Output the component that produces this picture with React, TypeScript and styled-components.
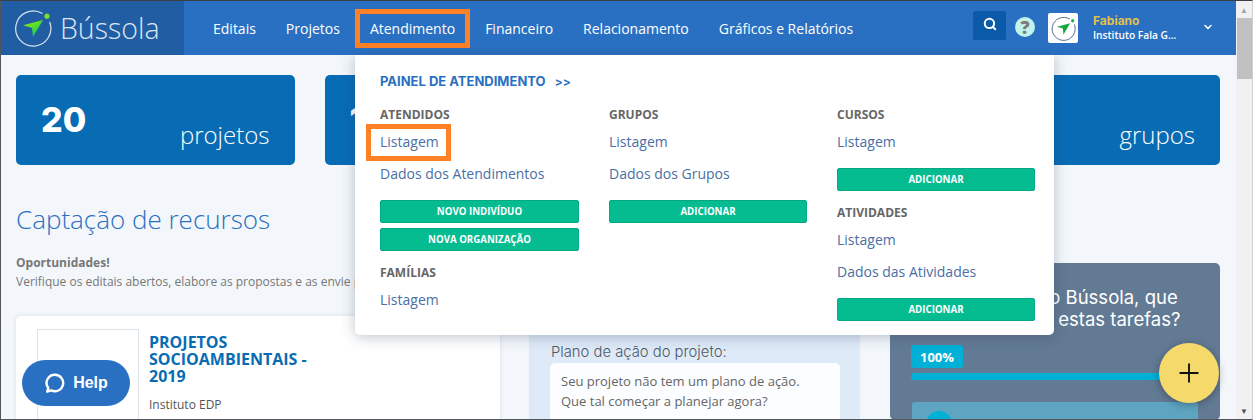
import React from 'react';
import styled, { createGlobalStyle } from 'styled-components';
import { Search, ChevronDown, Plus } from 'lucide-react';

const GlobalStyle = createGlobalStyle`
    html, body {
        margin: 0;
        padding: 0;
        overflow: hidden;
    }
    body {
        font-family: 'Open Sans', 'Liberation Sans', sans-serif;
    }
    * {
        box-sizing: border-box;
    }
`;

const NAV_ITEMS = ['Editais', 'Projetos', 'Atendimento', 'Financeiro', 'Relacionamento', 'Gráficos e Relatórios'];

const STATS = [
    { value: '20', label: 'projetos' },
    { value: '17', label: 'atendidos' },
    { value: '48', label: 'cursos' },
    { value: '12', label: 'grupos' },
];

const LogoMark: React.FC<{ id: string; size: number; ring: string; dot: string; tip: string; tail: string }> = ({
    id,
    size,
    ring,
    dot,
    tip,
    tail,
}) => (
    <svg width={size} height={size} viewBox="0 0 40 40" fill="none">
        <defs>
            <linearGradient id={id} x1="0" y1="0" x2="0.6" y2="1">
                <stop offset="0" stopColor={tip} />
                <stop offset="1" stopColor={tail} />
            </linearGradient>
        </defs>
        <path d="M29.5 4.5A18.5 18.5 0 1 0 37.6 14" stroke={ring} strokeWidth="1.3" strokeLinecap="round" />
        <circle cx="34.7" cy="7.5" r="2.7" fill={dot} />
        <path d="M9.5 17 L30.5 11.5 L20 29.5 L19 20 Z" fill={`url(#${id})`} />
    </svg>
);

const App: React.FC = () => {
    return (
        <>
            <GlobalStyle />
            <Window>
                <Page>
                    <Header>
                        <LogoArea>
                            <LogoMark id="logo-main" size={38} ring="#d4e2f0" dot="#7be02c" tip="#9ef000" tail="#12c85a" />
                            <LogoText>Bússola</LogoText>
                        </LogoArea>
                        <Nav>
                            {NAV_ITEMS.map((item) => (
                                <NavItem key={item} $highlight={item === 'Atendimento'}>
                                    {item}
                                </NavItem>
                            ))}
                        </Nav>
                        <HeaderRight>
                            <SearchButton>
                                <Search size={14} color="#fff" strokeWidth={3.4} />
                            </SearchButton>
                            <HelpCircle>?</HelpCircle>
                            <Avatar>
                                <LogoMark id="logo-small" size={25} ring="#35507a" dot="#1db54a" tip="#1db54a" tail="#0f9c3a" />
                            </Avatar>
                            <UserInfo>
                                <UserName>Fabiano</UserName>
                                <UserOrg>Instituto Fala G...</UserOrg>
                            </UserInfo>
                            <ChevronWrap>
                                <ChevronDown size={12} color="#fff" strokeWidth={3} />
                            </ChevronWrap>
                        </HeaderRight>
                    </Header>

                    <Content>
                        <StatRow>
                            {STATS.map((stat) => (
                                <StatCard key={stat.label}>
                                    <StatValue>{stat.value}</StatValue>
                                    <StatLabel>{stat.label}</StatLabel>
                                </StatCard>
                            ))}
                        </StatRow>

                        <Columns>
                            <LeftColumn>
                                <SectionTitle>Captação de recursos</SectionTitle>
                                <IntroBold>Oportunidades!</IntroBold>
                                <IntroText>Verifique os editais abertos, elabore as propostas e as envie para análise.</IntroText>
                                <EditalCard>
                                    <EditalImage />
                                    <EditalBody>
                                        <EditalTitle>PROJETOS SOCIOAMBIENTAIS - 2019</EditalTitle>
                                        <EditalOrg>Instituto EDP</EditalOrg>
                                    </EditalBody>
                                </EditalCard>
                            </LeftColumn>
                            <PlanCard>
                                <PlanLabel>Plano de ação do projeto:</PlanLabel>
                                <PlanBox>
                                    Seu projeto não tem um plano de ação.
                                    <br />
                                    Que tal começar a planejar agora?
                                </PlanBox>
                            </PlanCard>
                            <TaskPanel>
                                <TaskTitle>
                                    Já conheceu o Bússola, que
                                    <br />
                                    tal fazer todas estas tarefas?
                                </TaskTitle>
                                <ProgressChip>100%</ProgressChip>
                                <ProgressBar />
                                <TaskBox>
                                    <TaskDot />
                                </TaskBox>
                            </TaskPanel>
                        </Columns>
                    </Content>

                    <Dropdown>
                        <PanelLink>
                            PAINEL DE ATENDIMENTO <PanelArrows>&gt;&gt;</PanelArrows>
                        </PanelLink>
                        <MenuGrid>
                            <MenuColumn>
                                <MenuHeading>ATENDIDOS</MenuHeading>
                                <MenuLink $highlight>Listagem</MenuLink>
                                <MenuLink>Dados dos Atendimentos</MenuLink>
                                <MenuButton $top={12}>NOVO INDIVÍDUO</MenuButton>
                                <MenuButton $top={5}>NOVA ORGANIZAÇÃO</MenuButton>
                                <MenuHeading $top={14}>FAMÍLIAS</MenuHeading>
                                <MenuLink>Listagem</MenuLink>
                            </MenuColumn>
                            <MenuColumn>
                                <MenuHeading>GRUPOS</MenuHeading>
                                <MenuLink>Listagem</MenuLink>
                                <MenuLink>Dados dos Grupos</MenuLink>
                                <MenuButton $top={12}>ADICIONAR</MenuButton>
                            </MenuColumn>
                            <MenuColumn>
                                <MenuHeading>CURSOS</MenuHeading>
                                <MenuLink>Listagem</MenuLink>
                                <MenuButton $top={12}>ADICIONAR</MenuButton>
                                <MenuHeading $top={14}>ATIVIDADES</MenuHeading>
                                <MenuLink>Listagem</MenuLink>
                                <MenuLink>Dados das Atividades</MenuLink>
                                <MenuButton $top={12}>ADICIONAR</MenuButton>
                            </MenuColumn>
                        </MenuGrid>
                    </Dropdown>

                    <HelpButton>
                        <svg width="22" height="22" viewBox="0 0 24 24" fill="none" stroke="#fff" strokeWidth="2.6" strokeLinejoin="round">
                            <path d="M12 3a9 9 0 1 1-4.2 17L3.5 21.5l1.2-4A9 9 0 0 1 12 3z" />
                        </svg>
                        Help
                    </HelpButton>
                    <Fab>
                        <Plus size={30} color="#111" strokeWidth={1.5} />
                    </Fab>
                </Page>
                <Scrollbar>
                    <ScrollArrow>▲</ScrollArrow>
                    <ScrollThumb />
                    <ScrollArrow $bottom>▼</ScrollArrow>
                </Scrollbar>
            </Window>
        </>
    );
};

export default App;

const Window = styled.div`
    width: 1253px;
    height: 420px;
    display: flex;
    overflow: hidden;
    border-top: 1px solid #3a3f44;
    border-left: 1px solid #50565c;
    border-bottom: 1px solid #50565c;
    border-right: 1px solid #d0d0d0;
`;

const Page = styled.div`
    position: relative;
    flex: 1;
    min-width: 0;
    overflow: hidden;
    background: #f3f7fb;
`;

const Header = styled.header`
    height: 54px;
    display: flex;
    background: #2a70c2;
`;

const LogoArea = styled.div`
    width: 183px;
    display: flex;
    align-items: center;
    gap: 8px;
    padding-left: 13px;
    background: #215da3;
`;

const LogoText = styled.span`
    font-size: 28.5px;
    font-weight: 300;
    color: #d9e5f2;
`;

const Nav = styled.nav`
    display: flex;
    align-items: center;
    padding-left: 14px;
`;

const NavItem = styled.a<{ $highlight?: boolean }>`
    height: 39px;
    margin-top: 1px;
    padding: 0 15px;
    display: flex;
    align-items: center;
    font-size: 14px;
    color: #fff;
    white-space: nowrap;
    box-shadow: ${({ $highlight }) => ($highlight ? 'inset 0 0 0 5px #ff8125' : 'none')};
`;

const HeaderRight = styled.div`
    margin-left: auto;
    padding-right: 7px;
    display: flex;
    align-items: center;
`;

const SearchButton = styled.button`
    width: 33px;
    height: 29px;
    margin-top: -5px;
    margin-right: 9px;
    padding: 0 0 4px;
    display: flex;
    align-items: center;
    justify-content: center;
    border: 0;
    border-radius: 2px;
    background: #0b5aa8;
`;

const HelpCircle = styled.span`
    width: 20px;
    height: 20px;
    margin-top: -2px;
    margin-right: 13px;
    display: flex;
    align-items: center;
    justify-content: center;
    border-radius: 50%;
    background: #c2f3ea;
    color: #7b7b7b;
    font-size: 18px;
    font-weight: 800;
`;

const Avatar = styled.div`
    width: 30px;
    height: 30px;
    margin-right: 15px;
    display: flex;
    align-items: center;
    justify-content: center;
    border-radius: 2px;
    background: #fff;
`;

const UserInfo = styled.div`
    width: 108px;
    display: flex;
    flex-direction: column;
    margin-top: -1px;
`;

const UserName = styled.span`
    font-size: 12px;
    line-height: 14px;
    font-weight: 700;
    font-family: 'Inter', sans-serif;
    color: #e3c04a;
`;

const UserOrg = styled.span`
    font-size: 10.2px;
    line-height: 14px;
    font-weight: 600;
    color: #fff;
`;

const ChevronWrap = styled.span`
    width: 28px;
    padding-left: 1px;
    display: flex;
    margin-top: -3px;
`;

const Content = styled.main`
    padding: 20px 16px 0 15px;
`;

const StatRow = styled.div`
    display: grid;
    grid-template-columns: repeat(4, 1fr);
    column-gap: 30px;
`;

const StatCard = styled.div`
    height: 90px;
    padding: 23px 25px 0;
    display: flex;
    justify-content: space-between;
    border-radius: 5px;
    background: #086cb5;
    color: #fff;
`;

const StatValue = styled.span`
    font-family: 'Inter', 'Liberation Sans', sans-serif;
    font-size: 34px;
    font-weight: 800;
    line-height: 44px;
`;

const StatLabel = styled.span`
    align-self: flex-end;
    margin-bottom: 14px;
    font-size: 24px;
    font-weight: 300;
    line-height: 32px;
`;

const Columns = styled.div`
    display: grid;
    grid-template-columns: 484px 331px 331px;
    column-gap: 29px;
`;

const LeftColumn = styled.div`
    display: flex;
    flex-direction: column;
    min-width: 0;
`;

const SectionTitle = styled.h2`
    margin: 35px 0 0;
    font-size: 26px;
    line-height: 38px;
    font-weight: 300;
    color: #2a70c2;
    white-space: nowrap;
`;

const IntroBold = styled.strong`
    margin-top: 16px;
    font-size: 12px;
    line-height: 18px;
    color: #777;
`;

const IntroText = styled.span`
    font-size: 12px;
    line-height: 20px;
    color: #777;
    white-space: nowrap;
`;

const EditalCard = styled.div`
    height: 130px;
    margin-top: 24px;
    padding: 13px 21px 0;
    display: flex;
    gap: 10px;
    border-radius: 5px;
    background: #fff;
    box-shadow: 0 0 4px rgba(60, 90, 130, 0.15);
`;

const EditalImage = styled.div`
    width: 102px;
    height: 120px;
    flex-shrink: 0;
    border: 1px solid #dde4ec;
`;

const EditalBody = styled.div`
    width: 172px;
    padding-top: 5px;
`;

const EditalTitle = styled.div`
    font-size: 16px;
    line-height: 17px;
    font-weight: 700;
    color: #086cb5;
`;

const EditalOrg = styled.div`
    margin-top: 12px;
    font-size: 12px;
    line-height: 16px;
    color: #555;
`;

const PlanCard = styled.section`
    height: 130px;
    align-self: end;
    padding: 27px 20px 0 21px;
    background: #deeaf8;
    border-radius: 5px;
`;

const PlanLabel = styled.div`
    margin-left: 1px;
    font-family: 'Inter', 'Liberation Sans', sans-serif;
    font-size: 14.8px;
    line-height: 18px;
    font-weight: 300;
    color: #4e5864;
`;

const PlanBox = styled.div`
    margin-top: 2px;
    height: 80px;
    padding: 8px 11px;
    border-radius: 5px;
    background: #fbfdff;
    font-size: 13px;
    line-height: 20px;
    color: #666;
    white-space: nowrap;
`;

const TaskPanel = styled.section`
    position: relative;
    margin: 98px 0 0 1px;
    height: 157px;
    padding: 23px 22px 0 21px;
    border-radius: 5px;
    background: #627a94;
    color: #fff;
    overflow: hidden;
`;

const TaskTitle = styled.div`
    font-family: 'Inter', 'Liberation Sans', sans-serif;
    font-size: 18.5px;
    line-height: 22px;
    text-align: center;
    white-space: nowrap;
`;

const ProgressChip = styled.div`
    width: 52px;
    height: 23px;
    margin-top: 15px;
    display: flex;
    align-items: center;
    justify-content: center;
    border-radius: 3px;
    background: #00b0d6;
    font-size: 13px;
    font-weight: 700;
`;

const ProgressBar = styled.div`
    height: 7px;
    margin-top: 5px;
    border-radius: 3px;
    background: #00b0d6;
`;

const TaskBox = styled.div`
    height: 60px;
    margin: 22px 0 0 1px;
    padding: 9px 14px;
    border-radius: 3px;
    background: #5ea5c2;
`;

const TaskDot = styled.div`
    width: 26px;
    height: 26px;
    border-radius: 50%;
    background: #00b0d6;
`;

const Dropdown = styled.div`
    position: absolute;
    top: 54px;
    left: 354px;
    width: 699px;
    height: 280px;
    padding: 17px 25px 0;
    border-radius: 0 0 5px 5px;
    background: #fff;
    box-shadow: 0 2px 14px rgba(40, 60, 90, 0.3);
`;

const PanelLink = styled.a`
    display: block;
    font-family: 'Inter', 'Liberation Sans', sans-serif;
    font-size: 13px;
    line-height: 18px;
    font-weight: 700;
    color: #2a70c2;
`;

const PanelArrows = styled.span`
    margin-left: 6px;
    font-size: 12px;
`;

const MenuGrid = styled.div`
    display: grid;
    grid-template-columns: 199px 198px 198px;
    column-gap: 30px;
    margin-top: 16px;
`;

const MenuColumn = styled.div`
    display: flex;
    flex-direction: column;
    align-items: flex-start;
`;

const MenuHeading = styled.h4<{ $top?: number }>`
    margin: ${({ $top }) => $top ?? 0}px 0 0;
    font-size: 12px;
    line-height: 16px;
    font-weight: 700;
    color: #666;
`;

const MenuLink = styled.a<{ $highlight?: boolean }>`
    position: relative;
    margin-top: 5px;
    font-size: 14px;
    line-height: 28px;
    color: #4a6fa5;
    white-space: nowrap;
    & + & {
        margin-top: 4px;
    }
    ${({ $highlight }) =>
        $highlight &&
        `
        &::after {
            content: '';
            position: absolute;
            top: -4px;
            bottom: -5px;
            left: -14px;
            right: -12px;
            border: 5px solid #ff8125;
        }
    `}
`;

const MenuButton = styled.button<{ $top: number }>`
    width: 100%;
    height: 23px;
    margin-top: ${({ $top }) => $top}px;
    padding: 0;
    border: 1px solid #04a884;
    border-radius: 2px;
    background: #05bc91;
    color: #fff;
    font-family: 'Open Sans', sans-serif;
    font-size: 9.7px;
    font-weight: 700;
`;

const HelpButton = styled.button`
    position: absolute;
    left: 21px;
    top: 359px;
    width: 108px;
    height: 46px;
    display: flex;
    align-items: center;
    justify-content: center;
    gap: 7px;
    border: 0;
    border-radius: 23px;
    background: #2a70c2;
    color: #fff;
    font-family: 'Liberation Sans', Arial, sans-serif;
    font-size: 16px;
    font-weight: 700;
`;

const Fab = styled.div`
    position: absolute;
    left: 1158px;
    top: 342px;
    width: 60px;
    height: 60px;
    display: flex;
    align-items: center;
    justify-content: center;
    border-radius: 50%;
    background: #f6d96b;
    box-shadow: 0 2px 8px rgba(0, 0, 0, 0.3);
`;

const Scrollbar = styled.div`
    width: 16px;
    flex-shrink: 0;
    display: flex;
    flex-direction: column;
    background: #f1f1f1;
`;

const ScrollArrow = styled.div<{ $bottom?: boolean }>`
    height: 17px;
    margin-top: ${({ $bottom }) => ($bottom ? 'auto' : '0')};
    display: flex;
    align-items: center;
    justify-content: center;
    font-size: 8px;
    color: ${({ $bottom }) => ($bottom ? '#505050' : '#a3a3a3')};
`;

const ScrollThumb = styled.div`
    width: 15px;
    height: 61px;
    margin-left: 1px;
    background: #c1c1c1;
`;
